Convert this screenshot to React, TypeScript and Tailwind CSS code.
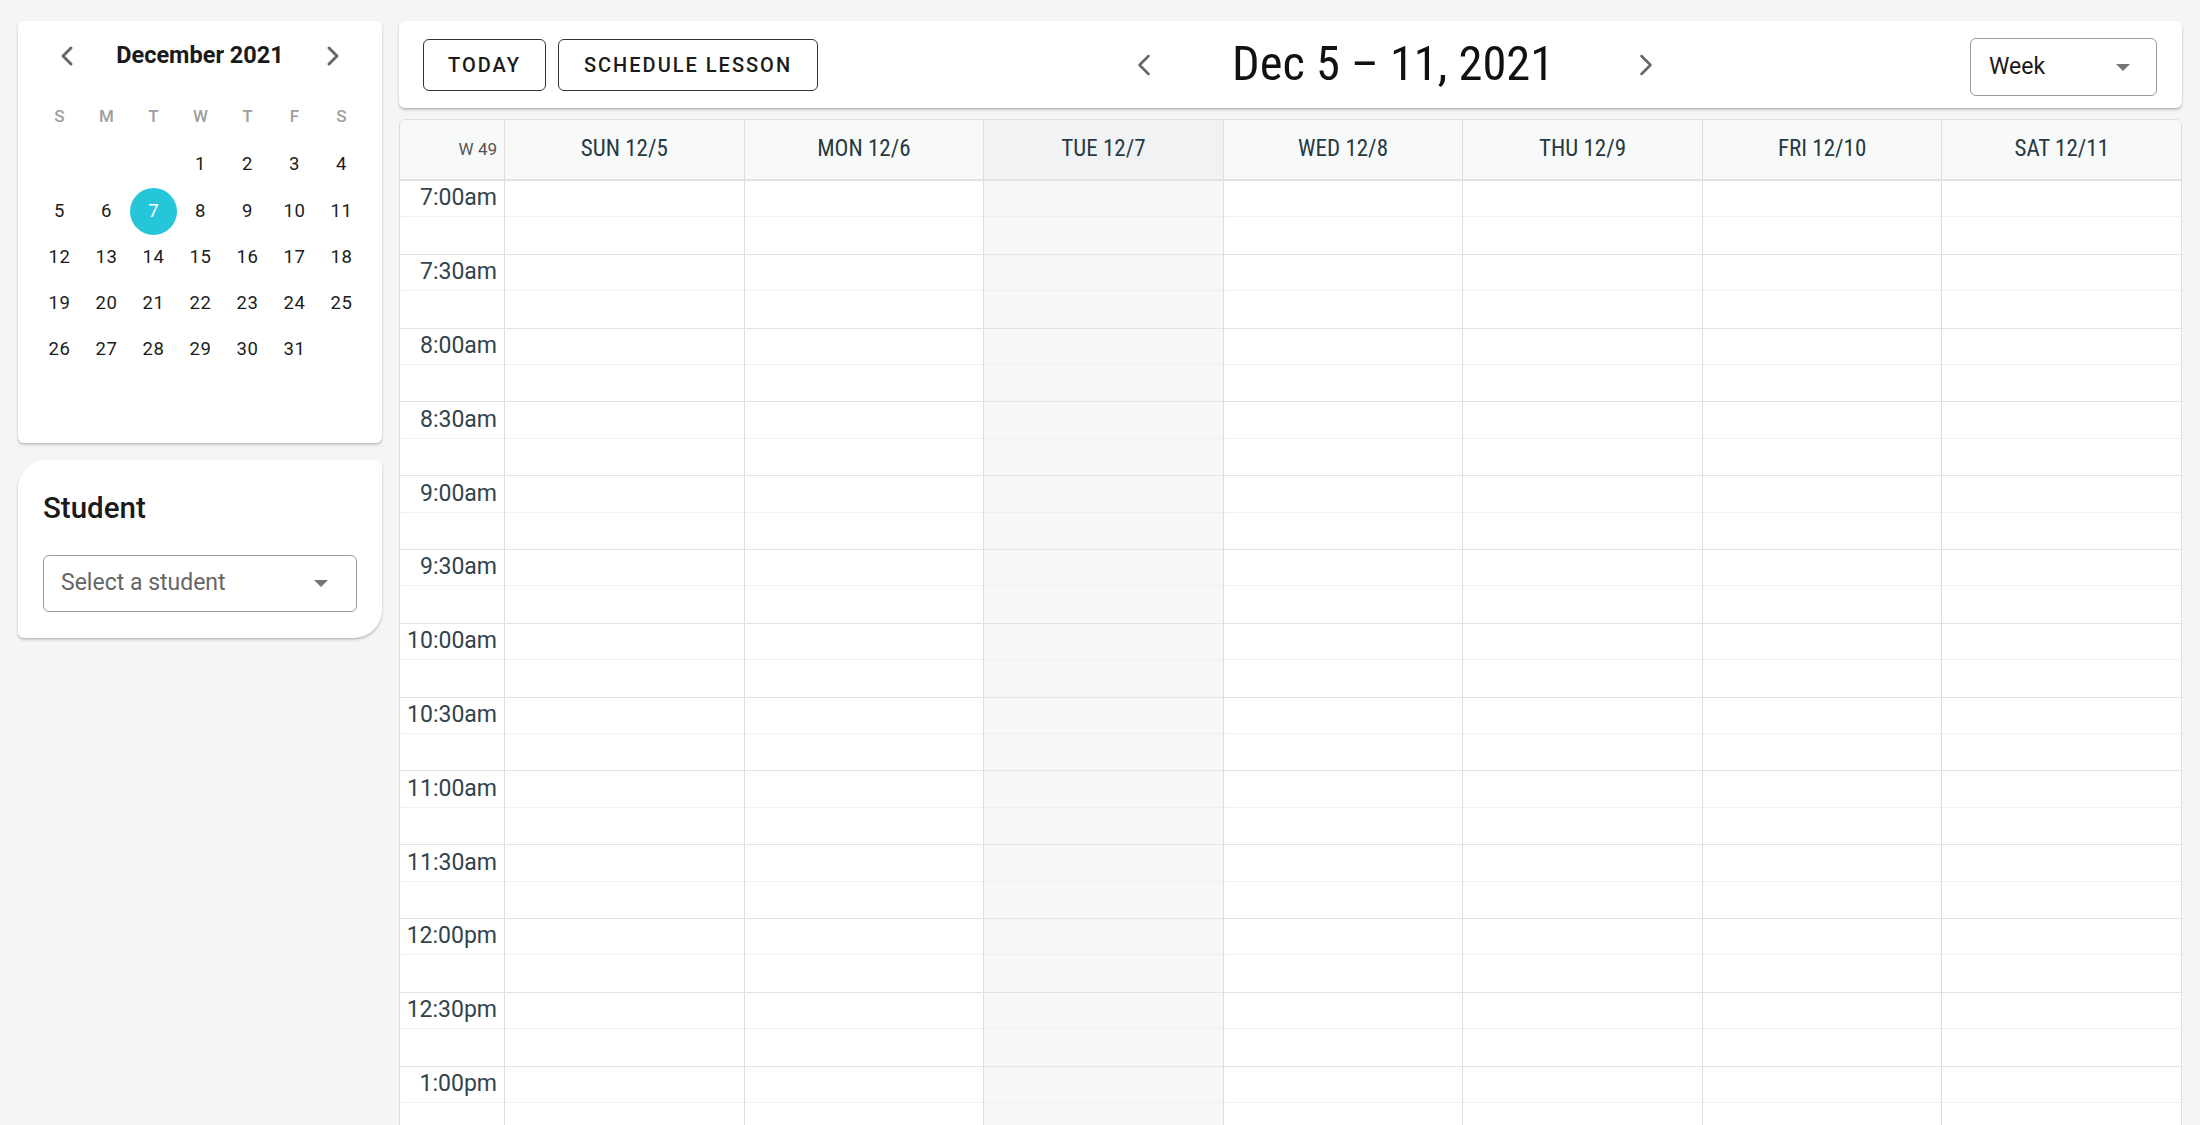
import React from "react";
import { ChevronLeft, ChevronRight } from "lucide-react";

const days = ["SUN 12/5", "MON 12/6", "TUE 12/7", "WED 12/8", "THU 12/9", "FRI 12/10", "SAT 12/11"];
const times = [
  "7:00am", "7:30am", "8:00am", "8:30am", "9:00am", "9:30am", "10:00am", "10:30am",
  "11:00am", "11:30am", "12:00pm", "12:30pm", "1:00pm",
];
const weeks: (number | null)[][] = [
  [null, null, null, 1, 2, 3, 4],
  [5, 6, 7, 8, 9, 10, 11],
  [12, 13, 14, 15, 16, 17, 18],
  [19, 20, 21, 22, 23, 24, 25],
  [26, 27, 28, 29, 30, 31, null],
];
const weekdays = ["S", "M", "T", "W", "T", "F", "S"];

function Caret() {
  return (
    <svg width="14" height="7" viewBox="0 0 10 5" className="text-[#757575]">
      <path d="M0 0l5 5 5-5z" fill="currentColor" />
    </svg>
  );
}

function MiniCalendar() {
  return (
    <div className="h-[422px] bg-white rounded-[6px] shadow-[0_2px_3px_rgba(0,0,0,0.18),0_1px_1px_rgba(0,0,0,0.08)] px-[18px]">
      <div className="h-[70px] flex items-center justify-between px-[15px]">
        <ChevronLeft size={32} strokeWidth={2.2} className="text-[#666]" />
        <span className="text-[23.5px] font-bold text-[#1a1a1a]">December 2021</span>
        <ChevronRight size={32} strokeWidth={2.2} className="text-[#666]" />
      </div>
      <div className="grid grid-cols-7 w-[329px] h-[51px] items-center">
        {weekdays.map((d, i) => (
          <div key={i} className="text-center text-[17px] font-medium text-[#9e9e9e]">
            {d}
          </div>
        ))}
      </div>
      <div className="w-[329px]">
        {weeks.map((w, wi) => (
          <div key={wi} className="grid grid-cols-7 h-[46.3px]">
            {w.map((d, di) => (
              <div key={di} className="flex items-center justify-center">
                {d === 7 ? (
                  <div className="w-[47px] h-[47px] rounded-full bg-[#26c6da] text-white flex items-center justify-center text-[18.5px]">
                    7
                  </div>
                ) : (
                  <span className="text-[18.5px] text-[#1c1c1c] tracking-[0.03em]">{d ?? ""}</span>
                )}
              </div>
            ))}
          </div>
        ))}
      </div>
    </div>
  );
}

function StudentCard() {
  return (
    <div className="h-[178px] bg-white rounded-tl-[28px] rounded-br-[28px] rounded-tr-[6px] rounded-bl-[6px] shadow-[0_2px_3px_rgba(0,0,0,0.18),0_1px_1px_rgba(0,0,0,0.08)] px-[25px] pt-[31px]">
      <div className="text-[29.5px] leading-[34px] font-medium text-[#1a1a1a]">Student</div>
      <div className="mt-[30px] h-[57px] border border-[#9a9a9a] rounded-[6px] flex items-center justify-between pl-[17px] pr-[28px]">
        <span className="text-[23px] text-[#666]">Select a student</span>
        <Caret />
      </div>
    </div>
  );
}

function Toolbar() {
  return (
    <div className="h-[87px] shrink-0 bg-white rounded-[6px] shadow-[0_2px_3px_rgba(0,0,0,0.2),0_1px_1px_rgba(0,0,0,0.08)] flex items-center pl-[24px] pr-[25px]">
      <button className="h-[52px] w-[123px] border-[1.5px] border-[#333] rounded-[6px] text-[20px] font-medium tracking-[0.1em] text-[#1b1b1b]">
        TODAY
      </button>
      <button className="ml-[12px] h-[52px] w-[260px] border-[1.5px] border-[#333] rounded-[6px] text-[20px] font-medium tracking-[0.1em] text-[#1b1b1b]">
        SCHEDULE LESSON
      </button>
      <div className="ml-[308px] flex items-center">
        <ChevronLeft size={36} strokeWidth={1.7} className="text-[#666]" />
        <div className="ml-[70px] w-[322px] text-center text-[48.5px] leading-none text-[#111] font-[family-name:'Roboto_Condensed',Roboto,sans-serif] font-stretch-condensed whitespace-nowrap">
          Dec 5 – 11, 2021
        </div>
        <ChevronRight size={36} strokeWidth={1.7} className="ml-[74px] text-[#666]" />
      </div>
      <div className="ml-auto self-start mt-[17px] w-[187px] h-[58px] border border-[#9a9a9a] rounded-[6px] flex items-center justify-between pl-[18px] pr-[26px]">
        <span className="text-[23px] text-[#1a1a1a]">Week</span>
        <Caret />
      </div>
    </div>
  );
}

function WeekGrid() {
  return (
    <div className="mt-[11px] bg-white border border-[#dedede] rounded-t-[6px] overflow-hidden shrink-0">
      <div className="flex h-[61px] bg-[#f8f9f9] border-b-2 border-[#e3e3e3]">
        <div className="w-[104px] shrink-0 flex items-center justify-end pr-[7px] text-[17px] text-[#555]">
          W 49
        </div>
        {days.map((d, i) => (
          <div
            key={d}
            className={`flex-1 border-l border-[#dedede] flex items-center justify-center text-[23px] font-normal text-[#263a44] font-[family-name:'Roboto_Condensed',Roboto,sans-serif] font-stretch-condensed ${
              i === 2 ? "bg-[#f1f2f4]" : ""
            }`}
          >
            {d}
          </div>
        ))}
      </div>
      {times.map((t) => (
        <div key={t} className="flex h-[73.8px] border-b border-[#e3e3e3]">
          <div className="w-[104px] shrink-0 flex flex-col">
            <div className="h-1/2 border-b border-dotted border-[#e6e6e6] flex items-center justify-end pr-[7px] text-[23px] text-[#33434b]">
              {t}
            </div>
          </div>
          {days.map((d, i) => (
            <div key={d} className={`flex-1 border-l border-[#dedede] flex flex-col ${i === 2 ? "bg-[#f6f7f9]" : ""}`}>
              <div className="h-1/2 border-b border-dotted border-[#e6e6e6]" />
            </div>
          ))}
        </div>
      ))}
    </div>
  );
}

export default function App() {
  return (
    <div className="h-screen w-full overflow-hidden bg-[#f4f6f5] flex gap-[17px] px-[18px] pt-[21px] font-[family-name:Roboto,sans-serif]">
      <div className="w-[364px] shrink-0 flex flex-col gap-[17px]">
        <MiniCalendar />
        <StudentCard />
      </div>
      <div className="flex-1 flex flex-col min-w-0">
        <Toolbar />
        <WeekGrid />
      </div>
    </div>
  );
}
